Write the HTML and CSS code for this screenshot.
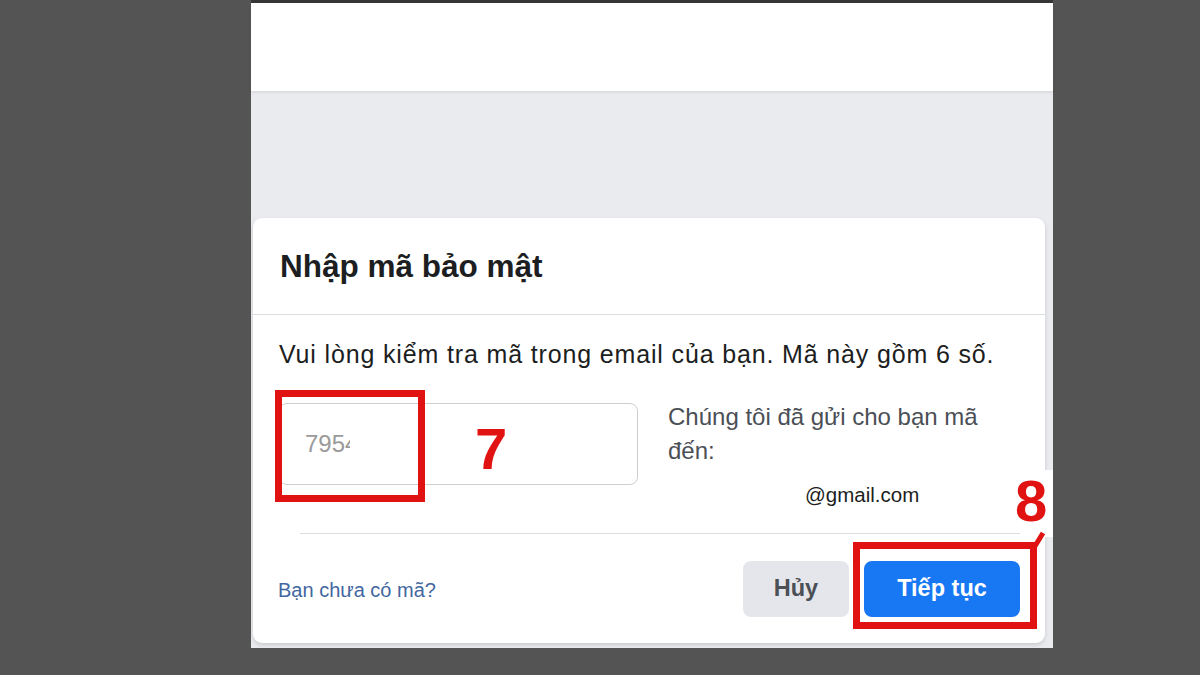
FILE: index.html
```html
<!DOCTYPE html>
<html lang="vi">
<head>
<meta charset="utf-8">
<link rel="stylesheet" href="styles.css">
</head>
<body>
<div class="panel">
  <div class="panel-top"></div>
  <div class="card">
    <div class="card-head"><h2 class="title">Nhập mã bảo mật</h2></div>
    <div class="card-body">
      <p class="lead">Vui lòng kiểm tra mã trong email của bạn. Mã này gồm 6 số.</p>
      <div class="code-row">
        <div class="code-input"><span class="code-text">795</span><span class="code-cut">4</span></div>
        <div class="sent">
          <p class="sent-text">Chúng tôi đã gửi cho bạn mã<br>đến:</p>
          <p class="sent-mail">@gmail.com</p>
        </div>
      </div>
    </div>
    <div class="card-divider"></div>
    <div class="card-foot">
      <a class="no-code">Bạn chưa có mã?</a>
      <div class="actions">
        <button class="btn btn-cancel">Hủy</button>
        <button class="btn btn-primary">Tiếp tục</button>
      </div>
    </div>
  </div>

  <div class="mark mark-7"></div>
  <div class="num num-7">7</div>
  <div class="patch patch-8"></div>
  <div class="num num-8">8</div>
  <div class="mark mark-8"></div>
  <svg class="pointer" width="30" height="30" viewBox="0 0 30 30"><line x1="3" y1="26" x2="14" y2="8" stroke="#e01212" stroke-width="5"/></svg>
</div>
</body>
</html>
```
FILE: styles.css
```css
html, body {
  margin: 0;
  padding: 0;
}
body {
  width: 1200px;
  height: 675px;
  overflow: hidden;
  background: #545454;
  font-family: "Liberation Sans", Arial, sans-serif;
}
.panel {
  position: relative;
  margin-left: 251px;
  width: 802px;
  height: 645px;
  border-top: 3px solid #363636;
  background: #e9ebee;
}
.panel-top {
  height: 88px;
  background: #fff;
  border-bottom: 1px solid #dcdee2;
  box-shadow: 0 1px 2px rgba(0,0,0,0.06);
}
.card {
  margin: 126px 8px 0 2px;
  height: 425px;
  background: #fff;
  border-radius: 9px;
  box-shadow: 0 2px 4px rgba(0,0,0,0.14);
  display: flex;
  flex-direction: column;
}
.card-head {
  height: 96px;
  display: flex;
  align-items: center;
  padding-left: 27px;
  border-bottom: 1px solid #dadde1;
}
.title {
  margin: 0;
  font-size: 31.5px;
  font-weight: bold;
  color: #1c1e21;
}
.card-body {
  padding: 24px 26px 0 26px;
  height: 194px;
}
.lead {
  margin: 0;
  font-size: 25px;
  letter-spacing: 0.85px;
  line-height: 30px;
  color: #1c1e21;
  white-space: nowrap;
}
.code-row {
  display: flex;
  margin-top: 34px;
  gap: 30px;
}
.code-input {
  box-sizing: border-box;
  width: 359px;
  height: 82px;
  border: 1px solid #ccd0d5;
  border-radius: 8px;
  display: flex;
  align-items: center;
  padding-left: 25px;
  font-size: 24px;
  color: #9a9a9a;
}
.code-cut {
  display: inline-block;
  width: 5px;
  overflow: hidden;
}
.sent-text {
  margin: -3px 0 0 0;
  font-size: 24px;
  line-height: 34px;
  color: #4b4f56;
}
.sent-mail {
  margin: 15px 0 0 137px;
  font-size: 20.5px;
  line-height: 24px;
  color: #1c1e21;
}
.card-divider {
  height: 1px;
  margin-left: 47px;
  background: #dadde1;
}
.card-foot {
  flex: 1;
  display: flex;
  align-items: center;
  justify-content: space-between;
  padding: 0 25px 0 25px;
}
.no-code {
  font-size: 20px;
  color: #42679f;
  margin-top: 4px;
}
.actions {
  display: flex;
  gap: 15px;
}
.btn {
  height: 56px;
  border: none;
  border-radius: 8px;
  font-family: "Liberation Sans", Arial, sans-serif;
  font-weight: bold;
  font-size: 23.5px;
  padding: 0;
}
.btn-cancel {
  width: 106px;
  background: #e4e6eb;
  color: #4b4f56;
}
.btn-primary {
  width: 156px;
  background: #1877f2;
  color: #fff;
}

/* annotations */
.mark {
  position: absolute;
  border: 7px solid #e01212;
  box-sizing: border-box;
}
.mark-7 {
  left: 24px;
  top: 387px;
  width: 150px;
  height: 112px;
}
.mark-8 {
  left: 602px;
  top: 539px;
  width: 184px;
  height: 87px;
}
.num {
  position: absolute;
  font-family: "Liberation Sans", Arial, sans-serif;
  font-weight: bold;
  font-size: 58px;
  line-height: 58px;
  color: #e01212;
}
.num-7 {
  left: 224px;
  top: 417px;
}
.num-8 {
  left: 764px;
  top: 469px;
}
.patch {
  position: absolute;
  background: #fff;
}
.patch-8 {
  left: 769px;
  top: 467px;
  width: 33px;
  height: 67px;
}
.pointer {
  position: absolute;
  left: 778px;
  top: 522px;
}
```
